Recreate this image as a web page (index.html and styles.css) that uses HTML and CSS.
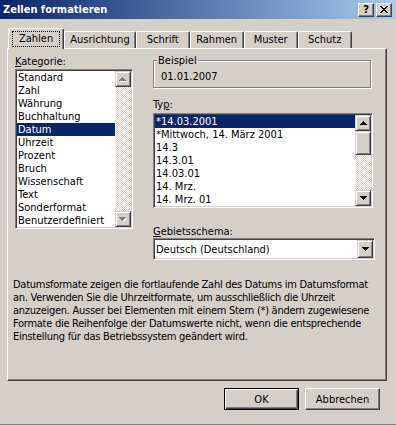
FILE: index.html
```html
<!DOCTYPE html>
<html lang="de">
<head>
    <meta charset="UTF-8">
    <title>Zellen formatieren</title>
    <link rel="stylesheet" href="styles.css">
</head>
<body>
    <div class="dialog">
        <div class="titlebar">
            <span class="title">Zellen formatieren</span>
            <div class="caption-buttons">
                <span class="cap-btn help">?</span>
                <span class="cap-btn close">
                    <svg width="8" height="7" viewBox="0 0 8 7"><path d="M0 0h2v1H0zM6 0h2v1H6zM1 1h2v1H1zM5 1h2v1H5zM2 2h4v1H2zM3 3h2v1H3zM2 4h4v1H2zM1 5h2v1H1zM5 5h2v1H5zM0 6h2v1H0zM6 6h2v1H6z" fill="#000"/></svg>
                </span>
            </div>
        </div>

        <!-- Tab row -->
        <div class="tabs">
            <div class="tab active"><span class="focus">Zahlen</span></div>
            <div class="tab">Ausrichtung</div>
            <div class="tab">Schrift</div>
            <div class="tab">Rahmen</div>
            <div class="tab">Muster</div>
            <div class="tab">Schutz</div>
        </div>

        <div class="panel">
            <div class="panel-row">
                <div class="col-left">
                    <div class="lbl"><u>K</u>ategorie:</div>
                    <div class="listbox cat-list">
                        <ul class="items">
                            <li>Standard</li>
                            <li>Zahl</li>
                            <li>Währung</li>
                            <li>Buchhaltung</li>
                            <li class="sel">Datum</li>
                            <li>Uhrzeit</li>
                            <li>Prozent</li>
                            <li>Bruch</li>
                            <li>Wissenschaft</li>
                            <li>Text</li>
                            <li>Sonderformat</li>
                            <li>Benutzerdefiniert</li>
                        </ul>
                        <div class="scrollbar">
                            <div class="sb-btn">
                                <svg width="8" height="5" viewBox="0 0 8 5"><path d="M4 1h1v1H4zM3 2h3v1H3zM2 3h5v1H2zM1 4h7v1H1z" fill="#fff"/><path d="M3 0h1v1H3zM2 1h3v1H2zM1 2h5v1H1zM0 3h7v1H0z" fill="#808080"/></svg>
                            </div>
                            <div class="sb-track"></div>
                            <div class="sb-btn">
                                <svg width="8" height="5" viewBox="0 0 8 5"><path d="M1 1h7v1H1zM2 2h5v1H2zM3 3h3v1H3zM4 4h1v1H4z" fill="#fff"/><path d="M0 0h7v1H0zM1 1h5v1H1zM2 2h3v1H2zM3 3h1v1H3z" fill="#808080"/></svg>
                            </div>
                        </div>
                    </div>
                </div>

                <div class="col-right">
                    <fieldset class="group">
                        <legend>Beispiel</legend>
                        <div class="sample">01.01.2007</div>
                    </fieldset>

                    <div class="lbl typ-lbl">Ty<u>p</u>:</div>
                    <div class="listbox type-list">
                        <ul class="items">
                            <li class="sel">*14.03.2001</li>
                            <li>*Mittwoch, 14. März 2001</li>
                            <li>14.3</li>
                            <li>14.3.01</li>
                            <li>14.03.01</li>
                            <li>14. Mrz.</li>
                            <li>14. Mrz. 01</li>
                        </ul>
                        <div class="scrollbar">
                            <div class="sb-btn">
                                <svg width="7" height="4" viewBox="0 0 7 4"><path d="M3 0h1v1H3zM2 1h3v1H2zM1 2h5v1H1zM0 3h7v1H0z" fill="#000"/></svg>
                            </div>
                            <div class="sb-thumb"></div>
                            <div class="sb-track"></div>
                            <div class="sb-btn">
                                <svg width="7" height="4" viewBox="0 0 7 4"><path d="M0 0h7v1H0zM1 1h5v1H1zM2 2h3v1H2zM3 3h1v1H3z" fill="#000"/></svg>
                            </div>
                        </div>
                    </div>

                    <div class="lbl geb-lbl"><u>G</u>ebietsschema:</div>
                    <div class="combo">
                        <span class="combo-text">Deutsch (Deutschland)</span>
                        <span class="combo-btn">
                            <svg width="7" height="4" viewBox="0 0 7 4"><path d="M0 0h7v1H0zM1 1h5v1H1zM2 2h3v1H2zM3 3h1v1H3z" fill="#000"/></svg>
                        </span>
                    </div>
                </div>
            </div>

            <p class="desc">Datumsformate zeigen die fortlaufende Zahl des Datums im Datumsformat<br>an. Verwenden Sie die Uhrzeitformate, um ausschließlich die Uhrzeit<br>anzuzeigen. Ausser bei Elementen mit einem Stern (*) ändern zugewiesene<br>Formate die Reihenfolge der Datumswerte nicht, wenn die entsprechende<br>Einstellung für das Betriebssystem geändert wird.</p>
        </div>

        <div class="actions">
            <button class="btn default">OK</button>
            <button class="btn">Abbrechen</button>
        </div>
    </div>
</body>
</html>
```

FILE: styles.css
```css
body {
    margin: 0;
    font-family: "DejaVu Sans Condensed", "DejaVu Sans", sans-serif;
    font-stretch: condensed;
    font-size: 11px;
    line-height: 13px;
    color: #000;
}

.dialog {
    width: 396px;
    height: 425px;
    box-sizing: border-box;
    background: #d4d0c8;
    border-bottom: 1px solid #808080;
    display: flex;
    flex-direction: column;
}

/* Title bar */
.titlebar {
    height: 19px;
    display: flex;
    align-items: center;
    justify-content: space-between;
    padding: 0 4px 0 3px;
    background: linear-gradient(to right, #0a246a, #a6caf0);
}

.title {
    color: #fff;
    font-weight: bold;
    font-size: 11px;
}

.caption-buttons {
    display: flex;
    gap: 2px;
}

.cap-btn {
    width: 16px;
    height: 14px;
    box-sizing: border-box;
    display: flex;
    align-items: center;
    justify-content: center;
    background: #d4d0c8;
    border: 1px solid;
    border-color: #fff #404040 #404040 #fff;
    box-shadow: inset -1px -1px #808080;
    font-weight: bold;
    font-size: 11px;
    line-height: 11px;
}

/* Tabs */
.tabs {
    display: flex;
    align-items: flex-end;
    height: 20px;
    margin-top: 9px;
    padding-left: 10px;
}

.tab {
    height: 17px;
    min-width: 54px;
    box-sizing: border-box;
    padding: 1px 5px 0;
    text-align: center;
    border-top: 1px solid #fff;
    border-left: 1px solid #fff;
    border-right: 1px solid #404040;
    box-shadow: inset -1px 0 #808080;
    border-radius: 2px 2px 0 0;
    white-space: nowrap;
}

.tab.active {
    position: relative;
    z-index: 1;
    height: 21px;
    padding: 2px 3px 0;
    margin: 0 0 -1px -2px;
    background: #d4d0c8;
}

.focus {
    display: inline-block;
    padding: 0 6px 1px;
    border: 1px dotted #000;
}

/* Tab panel */
.panel {
    height: 333px;
    margin: 0 9px 0 7px;
    box-sizing: border-box;
    padding: 6px 0 0 5px;
    border: 1px solid;
    border-color: #fff #404040 #404040 #fff;
    box-shadow: inset -1px -1px #808080;
}

.panel-row {
    display: flex;
    gap: 20px;
    padding-left: 2px;
}

.col-left {
    width: 118px;
}

.col-right {
    width: 222px;
    margin-top: -1px;
}

.lbl {
    height: 13px;
    white-space: nowrap;
}

/* Sunken list boxes */
.listbox {
    display: flex;
    box-sizing: border-box;
    background: #fff;
    border: 1px solid;
    border-color: #808080 #fff #fff #808080;
    box-shadow: inset 1px 1px #404040, inset -1px -1px #d4d0c8;
    padding: 1px;
}

.cat-list {
    width: 118px;
    height: 160px;
    margin-top: 1px;
}

.type-list {
    width: 220px;
    height: 95px;
    margin-top: 2px;
}

.items {
    list-style: none;
    margin: 0;
    padding: 0;
    flex: 1;
    overflow: hidden;
}

.items li {
    height: 13px;
    padding-left: 1px;
    white-space: nowrap;
}

.items li.sel {
    background: #0a246a;
    color: #fff;
}

.scrollbar {
    width: 16px;
    display: flex;
    flex-direction: column;
}

.sb-btn,
.sb-thumb,
.combo-btn {
    box-sizing: border-box;
    background: #d4d0c8;
    border: 1px solid;
    border-color: #d4d0c8 #404040 #404040 #d4d0c8;
    box-shadow: inset 1px 1px #fff, inset -1px -1px #808080;
}

.sb-btn {
    height: 16px;
    display: flex;
    align-items: center;
    justify-content: center;
}

.sb-thumb {
    height: 24px;
}

.sb-track {
    flex: 1;
    background: repeating-conic-gradient(#d4d0c8 0 25%, #fff 0 50%) 0 0 / 2px 2px;
}

/* Beispiel group */
.group {
    width: 218px;
    box-sizing: border-box;
    margin: 0;
    padding: 3px 0 4px 7px;
    border: 1px solid #808080;
    box-shadow: inset 1px 1px #fff, 1px 1px #fff;
}

.group legend {
    margin-left: -4px;
    padding: 0 1px;
    background: #d4d0c8;
}

.sample {
    height: 13px;
}

.typ-lbl {
    margin-top: 10px;
}

.geb-lbl {
    margin-top: 17px;
}

/* Combo box */
.combo {
    width: 222px;
    height: 22px;
    box-sizing: border-box;
    display: flex;
    align-items: center;
    background: #fff;
    border: 1px solid;
    border-color: #808080 #fff #fff #808080;
    box-shadow: inset 1px 1px #404040, inset -1px -1px #d4d0c8;
    padding: 1px;
}

.combo-text {
    flex: 1;
    padding-left: 1px;
}

.combo-btn {
    width: 16px;
    height: 18px;
    display: flex;
    align-items: center;
    justify-content: center;
}

.desc {
    margin: 18px 0 0;
    white-space: nowrap;
    letter-spacing: -0.27px;
}

/* Dialog buttons */
.actions {
    display: flex;
    justify-content: flex-end;
    gap: 6px;
    margin-top: 7px;
    padding-right: 16px;
}

.btn {
    width: 75px;
    height: 22px;
    padding: 0;
    font: inherit;
    color: #000;
    background: #d4d0c8;
    border: 1px solid;
    border-color: #fff #404040 #404040 #fff;
    box-shadow: inset -1px -1px #808080;
}

.btn.default {
    border-color: #000;
    box-shadow: inset 1px 1px #fff, inset -1px -1px #404040, inset -2px -2px #808080;
}
```
